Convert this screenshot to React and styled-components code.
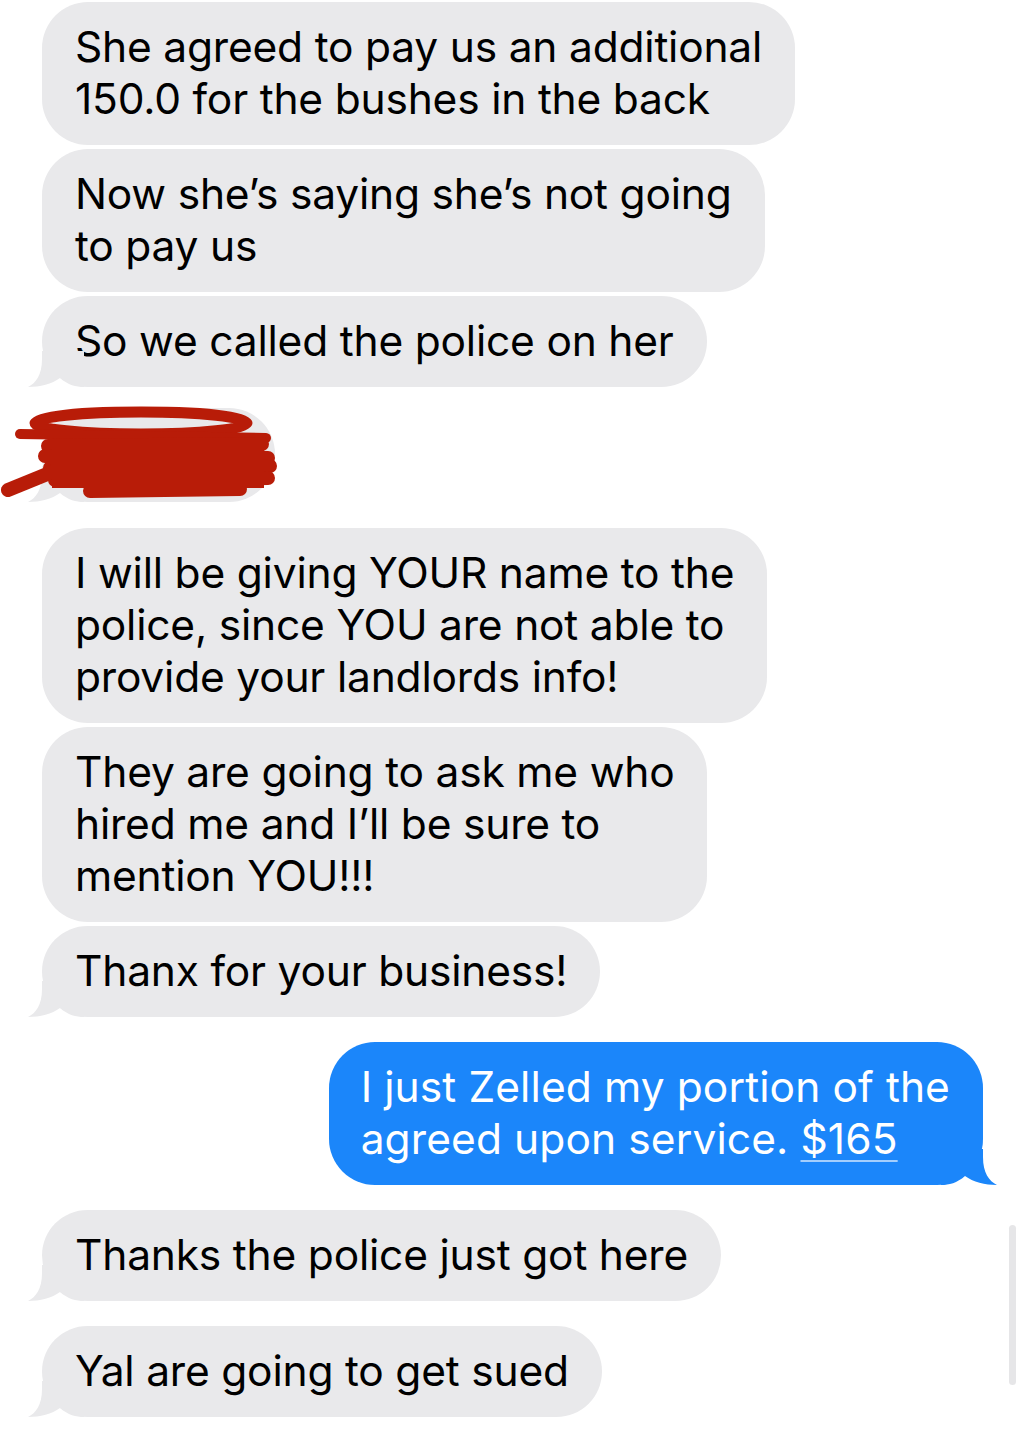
import React from "react";
import styled, { createGlobalStyle } from "styled-components";

const GlobalStyle = createGlobalStyle`
  html, body {
    margin: 0;
    padding: 0;
    background: #ffffff;
  }
  body {
    font-family: Inter, "Noto Sans", "Liberation Sans", sans-serif;
    -webkit-font-smoothing: antialiased;
  }
`;

const Screen = styled.div`
  position: relative;
  width: 1024px;
  height: 1448px;
  overflow: hidden;
  background: #fff;
`;

const Thread = styled.div`
  display: flex;
  flex-direction: column;
  gap: 25px;
  padding: 2px 41px 0 42px;
`;

const Group = styled.div`
  display: flex;
  flex-direction: column;
  align-items: ${(p) => (p.$sent ? "flex-end" : "flex-start")};
  gap: 4px;
`;

const RedactedGroup = styled(Group)`
  margin: -4px 0 1px;
`;

const Bubble = styled.div`
  position: relative;
  box-sizing: border-box;
  width: fit-content;
  padding: ${(p) => (p.$sent ? "19px 33px 20px 32px" : "19px 33px 20px 33px")};
  border-radius: 46px;
  background: ${(p) => (p.$sent ? "#1b86fa" : "#e9e9eb")};
  color: ${(p) => (p.$sent ? "#ffffff" : "#000000")};
  font-size: 42.5px;
  line-height: 52px;
  letter-spacing: ${(p) => (p.$sent ? "0.1px" : "-0.2px")};
  white-space: nowrap;
`;

const RedactedBubble = styled(Bubble)`
  width: 233px;
  height: 94px;
`;

const TailShape = styled.svg`
  position: absolute;
  bottom: 0;
  width: 56px;
  height: 36px;
  ${(p) =>
    p.$sent
      ? "right: -14px; transform: scaleX(-1);"
      : "left: -14px;"}
`;

const Scribble = styled.svg`
  position: absolute;
  left: -42px;
  top: -10px;
  width: 290px;
  height: 110px;
  overflow: visible;
`;

const Amount = styled.span`
  text-decoration: underline;
  text-decoration-color: rgba(255, 255, 255, 0.6);
  text-decoration-thickness: 2px;
  text-underline-offset: 6px;
`;

const ScrollIndicator = styled.div`
  position: absolute;
  left: 1009px;
  top: 1225px;
  width: 7px;
  height: 160px;
  border-radius: 4px;
  background: #e6e6e8;
`;

function Tail({ sent }) {
  return (
    <TailShape $sent={sent} viewBox="0 0 56 36">
      <path
        d="M14 0 L56 0 L56 36 C48 36 40 34 32 27 C24 33 12 36 0 36 C8 32 14 24 14 8 Z"
        fill={sent ? "#1b86fa" : "#e9e9eb"}
      />
    </TailShape>
  );
}

function Lines({ lines }) {
  return lines.map((l, i) => (
    <React.Fragment key={i}>
      {i > 0 && <br />}
      {l}
    </React.Fragment>
  ));
}

function Message({ lines, sent, tail, children }) {
  return (
    <Bubble $sent={sent}>
      {children || <Lines lines={lines} />}
      {tail && <Tail sent={sent} />}
    </Bubble>
  );
}

const RED = "#b81c08";

export default function App() {
  return (
    <Screen>
      <GlobalStyle />
      <Thread>
        <Group>
          <Message lines={["She agreed to pay us an additional", "150.0 for the bushes in the back"]} />
          <Message lines={["Now she’s saying she’s not going", "to pay us"]} />
          <Message lines={["So we called the police on her"]} tail />
        </Group>

        <RedactedGroup>
          <RedactedBubble>
            <Tail />
            <Scribble viewBox="0 0 290 110">
              <g stroke={RED} strokeLinecap="round" fill="none">
                <ellipse cx="141" cy="25" rx="106" ry="11" strokeWidth="11" />
                <line x1="20" y1="36" x2="266" y2="40" strokeWidth="10" />
                <line x1="48" y1="48" x2="262" y2="46" strokeWidth="14" />
                <line x1="45" y1="58" x2="268" y2="60" strokeWidth="14" />
                <line x1="50" y1="70" x2="270" y2="68" strokeWidth="14" />
                <line x1="55" y1="82" x2="268" y2="80" strokeWidth="14" />
                <line x1="90" y1="93" x2="240" y2="91" strokeWidth="14" />
                <line x1="8" y1="92" x2="62" y2="70" strokeWidth="14" />
              </g>
              <rect x="52" y="44" width="212" height="46" fill={RED} />
            </Scribble>
          </RedactedBubble>
        </RedactedGroup>

        <Group>
          <Message
            lines={[
              "I will be giving YOUR name to the",
              "police, since YOU are not able to",
              "provide your landlords info!",
            ]}
          />
          <Message lines={["They are going to ask me who", "hired me and I’ll be sure to", "mention YOU!!!"]} />
          <Message lines={["Thanx for your business!"]} tail />
        </Group>

        <Group $sent>
          <Message sent tail>
            I just Zelled my portion of the
            <br />
            agreed upon service. <Amount>$165</Amount>
          </Message>
        </Group>

        <Group>
          <Message lines={["Thanks the police just got here"]} tail />
        </Group>

        <Group>
          <Message lines={["Yal are going to get sued"]} tail />
        </Group>
      </Thread>
      <ScrollIndicator />
    </Screen>
  );
}
